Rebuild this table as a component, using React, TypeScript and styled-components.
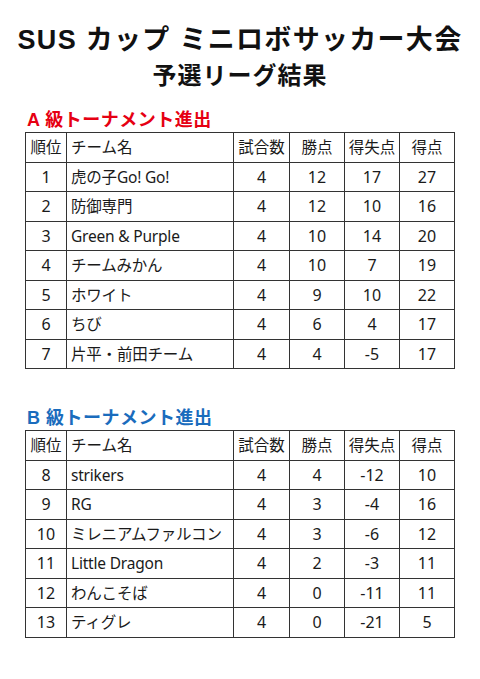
import styled, { createGlobalStyle } from 'styled-components';

const GlobalStyle = createGlobalStyle`
  html, body {
    margin: 0;
    padding: 0;
    background: #ffffff;
  }
  body {
    font-family: "Noto Sans", "Noto Sans CJK JP", sans-serif;
    color: #111111;
  }
`;

const Page = styled.div`
  width: 480px;
  height: 679px;
  padding-top: 22px;
  box-sizing: border-box;
  overflow: hidden;
  display: flex;
  flex-direction: column;
`;

const Title = styled.h1<{ $size: number; $spacing: number }>`
  margin: 0;
  text-align: center;
  font-family: "Liberation Sans", "Noto Sans CJK JP", sans-serif;
  font-weight: 700;
  font-size: ${(p) => p.$size}px;
  line-height: 36px;
  letter-spacing: ${(p) => p.$spacing}px;
  color: #111111;
`;

const Section = styled.section<{ $top: number }>`
  padding-left: 25px;
  margin-top: ${(p) => p.$top}px;
  display: flex;
  flex-direction: column;
`;

const SectionTitle = styled.h2<{ $color: string }>`
  margin: 0 0 2px 2px;
  font-family: "Liberation Sans", "Noto Sans CJK JP", sans-serif;
  font-weight: 700;
  font-size: 18px;
  line-height: 20px;
  letter-spacing: 0.5px;
  color: ${(p) => p.$color};
`;

const Table = styled.table`
  border-collapse: collapse;
  table-layout: fixed;
  width: 429px;
  font-family: "Noto Sans", "Noto Sans CJK JP", sans-serif;
  font-size: 15.5px;
  color: #1a1a1a;

  td,
  th {
    border: 1.5px solid #333333;
    height: 28.5px;
    padding: 0;
    font-weight: 400;
    text-align: center;
    vertical-align: middle;
    line-height: 20px;
  }
`;

const Col = styled.col<{ $w: number }>`
  width: ${(p) => p.$w}px;
`;

const NameCell = styled.td`
  && {
    text-align: left;
    padding-left: 4px;
    letter-spacing: -0.2px;
  }
`;

const HeadName = styled.th`
  && {
    text-align: left;
    padding-left: 4px;
  }
`;

const NumCell = styled.td`
  && {
    font-size: 16px;
  }
`;

type Row = [number, string, number, number, number, number];

const groupA: Row[] = [
  [1, '虎の子Go! Go!', 4, 12, 17, 27],
  [2, '防御専門', 4, 12, 10, 16],
  [3, 'Green & Purple', 4, 10, 14, 20],
  [4, 'チームみかん', 4, 10, 7, 19],
  [5, 'ホワイト', 4, 9, 10, 22],
  [6, 'ちび', 4, 6, 4, 17],
  [7, '片平・前田チーム', 4, 4, -5, 17],
];

const groupB: Row[] = [
  [8, 'strikers', 4, 4, -12, 10],
  [9, 'RG', 4, 3, -4, 16],
  [10, 'ミレニアムファルコン', 4, 3, -6, 12],
  [11, 'Little Dragon', 4, 2, -3, 11],
  [12, 'わんこそば', 4, 0, -11, 11],
  [13, 'ティグレ', 4, 0, -21, 5],
];

const colWidths = [41, 167, 56, 55, 55, 55];

function ResultTable({ rows }: { rows: Row[] }) {
  return (
    <Table>
      <colgroup>
        {colWidths.map((w, i) => (
          <Col key={i} $w={w} />
        ))}
      </colgroup>
      <thead>
        <tr>
          <th>順位</th>
          <HeadName>チーム名</HeadName>
          <th>試合数</th>
          <th>勝点</th>
          <th>得失点</th>
          <th>得点</th>
        </tr>
      </thead>
      <tbody>
        {rows.map(([rank, name, games, pts, diff, goals]) => (
          <tr key={rank}>
            <NumCell>{rank}</NumCell>
            <NameCell>{name}</NameCell>
            <NumCell>{games}</NumCell>
            <NumCell>{pts}</NumCell>
            <NumCell>{diff}</NumCell>
            <NumCell>{goals}</NumCell>
          </tr>
        ))}
      </tbody>
    </Table>
  );
}

export default function App() {
  return (
    <>
      <GlobalStyle />
      <Page>
        <Title $size={27} $spacing={1.3}>
          SUS カップ ミニロボサッカー大会
        </Title>
        <Title $size={24} $spacing={1}>
          予選リーグ結果
        </Title>
        <Section $top={16}>
          <SectionTitle $color="#e60012">A 級トーナメント進出</SectionTitle>
          <ResultTable rows={groupA} />
        </Section>
        <Section $top={39}>
          <SectionTitle $color="#1a6cbd">B 級トーナメント進出</SectionTitle>
          <ResultTable rows={groupB} />
        </Section>
      </Page>
    </>
  );
}
